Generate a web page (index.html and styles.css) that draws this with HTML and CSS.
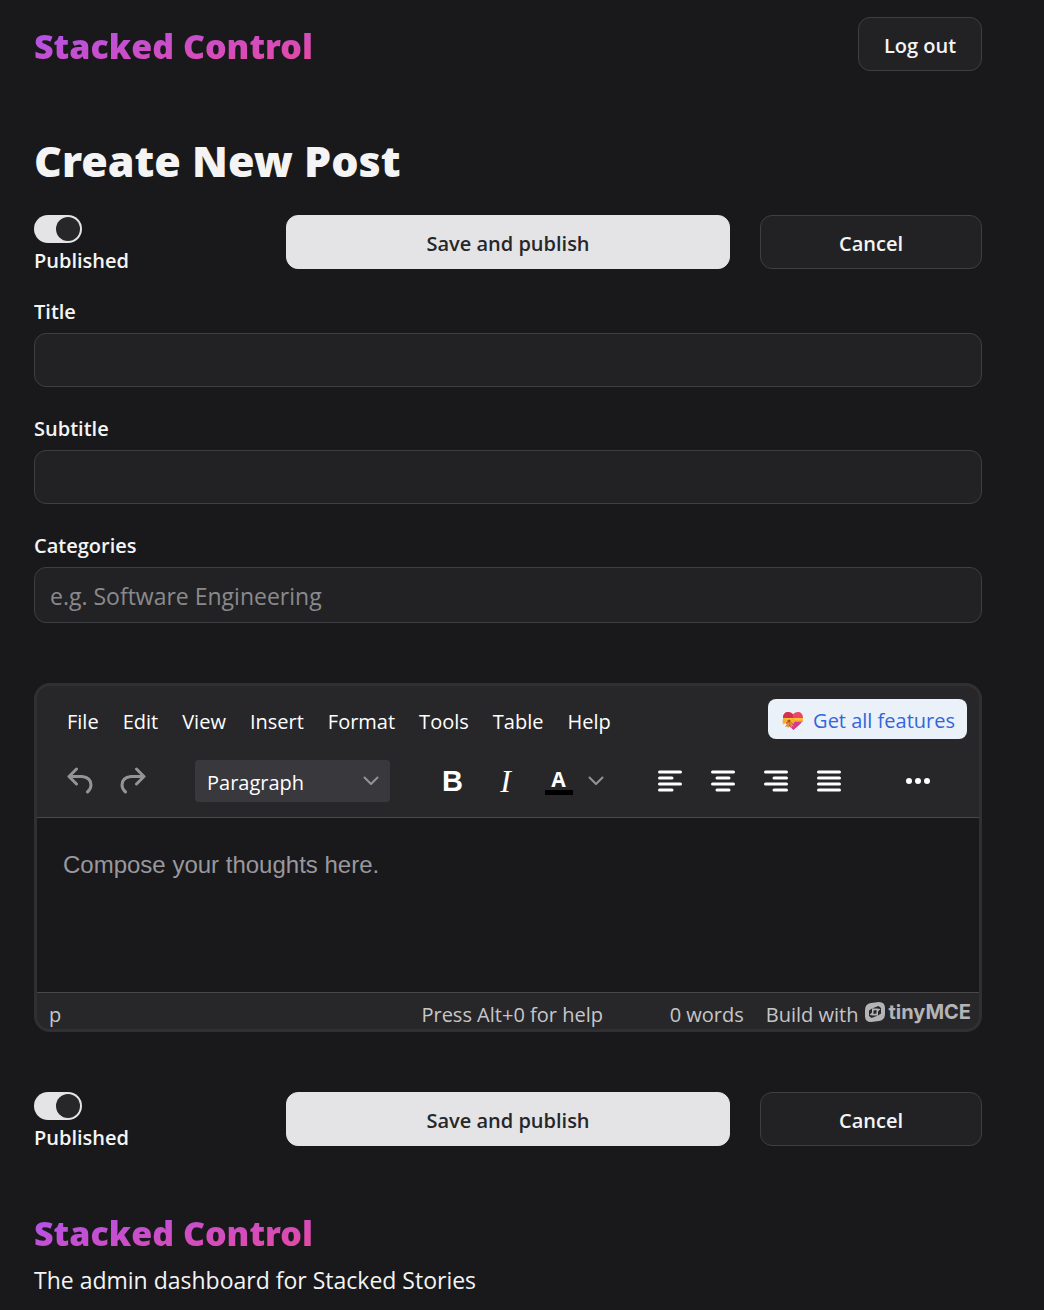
FILE: index.html
```html
<!DOCTYPE html>
<html lang="en">
<head>
  <meta charset="utf-8">
  <meta name="viewport" content="width=device-width, initial-scale=1">
  <title>Create New Post - Stacked Control</title>
  <link rel="stylesheet" href="styles.css">
</head>
<body>
  <header class="site-header">
    <a class="brand" href="#">Stacked Control</a>
    <button class="btn btn-small" type="button">Log out</button>
  </header>

  <main>
    <h1 class="page-title">Create New Post</h1>
    <form class="post-form">
      <div class="actions">
        <label class="toggle">
          <input class="switch" type="checkbox" role="switch" checked>
          <span>Published</span>
        </label>
        <button class="btn btn-primary" type="submit">Save and publish</button>
        <button class="btn" type="button">Cancel</button>
      </div>

      <div class="field">
        <label for="title">Title</label>
        <input class="text-input" id="title" type="text">
      </div>
      <div class="field">
        <label for="subtitle">Subtitle</label>
        <input class="text-input" id="subtitle" type="text">
      </div>
      <div class="field">
        <label for="categories">Categories</label>
        <input class="text-input text-input-tall" id="categories" type="text" placeholder="e.g. Software Engineering">
      </div>

      <section class="editor" aria-label="Post body">
        <div class="editor-head">
          <div class="menubar">
            <div class="menus">
              <button type="button">File</button>
              <button type="button">Edit</button>
              <button type="button">View</button>
              <button type="button">Insert</button>
              <button type="button">Format</button>
              <button type="button">Tools</button>
              <button type="button">Table</button>
              <button type="button">Help</button>
            </div>
            <a class="promo" href="#">
              <svg width="22" height="20" viewBox="0 0 22 20" aria-hidden="true">
                <path d="M11.500 19C9 16 1 12 1 6.500C1 3 3.500 1 6 1C8.300 1 10 2 11 3.500C12 2 13.700 1 16 1C18.500 1 21 3 21 6.500C21 12 14 16 11.500 19Z" fill="#ef4565"/>
                <path d="M1 7C1 3 3.500 1 6 1C8.300 1 10 2 11 3.500V7.500Z" fill="#d6304f"/>
                <path d="M11.500 19C14 16 20.500 12.500 21 8L9 11L8 15.500Z" fill="#d63a94"/>
                <path d="M1 7H21V10.500H1Z" fill="#fbc336"/>
                <path d="M1 9.500H21V10.500H1Z" fill="#e79b2c"/>
                <path d="M7 9.500L1.500 7Q-0.500 10 1.500 13.500Z M7 9.500L11.500 7Q13.500 9.500 11.500 13Z" fill="#f6b02c"/>
                <path d="M6.500 10L3 16L5 15.500L6.500 17L7.500 12L9.500 17L10.500 15L12 15.500L8 10Z" fill="#e2932b"/>
                <circle cx="7" cy="10" r="1.600" fill="#a8501f"/>
              </svg>
              <span>Get all features</span>
            </a>
          </div>

          <div class="toolbar">
            <div class="tools">
              <button class="muted" type="button" aria-label="Undo">
                <svg width="26" height="28" viewBox="0 0 26 28"><path d="M9.500 2L2 9.500L9.500 17M2 9.500H15Q24 10.500 24 18Q24 22 20.500 25"/></svg>
              </button>
              <button class="muted" type="button" aria-label="Redo">
                <svg width="26" height="28" viewBox="0 0 26 28"><path d="M16.500 2L24 9.500L16.500 17M24 9.500H11Q2 10.500 2 18Q2 22 5.500 25"/></svg>
              </button>
            </div>
            <div class="block-format">
              <select aria-label="Block format"><option>Paragraph</option></select>
              <svg width="16" height="10" viewBox="0 0 16 10" aria-hidden="true"><path d="M1.500 1.500L8 8L14.500 1.500"/></svg>
            </div>
            <div class="tools">
              <button class="glyph-bold" type="button" aria-label="Bold">B</button>
              <button class="glyph-italic" type="button" aria-label="Italic">I</button>
              <button class="glyph-color" type="button" aria-label="Text color"><span>A</span></button>
              <button class="narrow muted" type="button" aria-label="Text color menu">
                <svg width="16" height="10" viewBox="0 0 16 10"><path d="M1.500 1.500L8 8L14.500 1.500"/></svg>
              </button>
            </div>
            <div class="tools">
              <button type="button" aria-label="Align left">
                <svg width="24" height="22" viewBox="0 0 24 22"><path d="M1.500 2H22.500M1.500 8H14M1.500 14H22.500M1.500 20H14"/></svg>
              </button>
              <button type="button" aria-label="Align center">
                <svg width="24" height="22" viewBox="0 0 24 22"><path d="M1.500 2H22.500M6 8H18M1.500 14H22.500M6 20H18"/></svg>
              </button>
              <button type="button" aria-label="Align right">
                <svg width="24" height="22" viewBox="0 0 24 22"><path d="M1.500 2H22.500M10 8H22.500M1.500 14H22.500M10 20H22.500"/></svg>
              </button>
              <button type="button" aria-label="Justify">
                <svg width="24" height="22" viewBox="0 0 24 22"><path d="M1.500 2H22.500M1.500 8H22.500M1.500 14H22.500M1.500 20H22.500"/></svg>
              </button>
            </div>
            <div class="tools">
              <button type="button" aria-label="More">
                <svg class="dots" width="24" height="6" viewBox="0 0 24 6"><circle cx="3" cy="3" r="3"/><circle cx="12" cy="3" r="3"/><circle cx="21" cy="3" r="3"/></svg>
              </button>
            </div>
          </div>
        </div>

        <textarea class="compose" aria-label="Content" placeholder="Compose your thoughts here."></textarea>

        <div class="statusbar">
          <span class="path">p</span>
          <span class="help">Press Alt+0 for help</span>
          <span class="words">0 words</span>
          <span class="credit">Build with
            <a class="tiny" href="#">
              <svg width="20" height="20" viewBox="0 0 20 20" aria-hidden="true">
                <path fill-rule="evenodd" fill="currentColor" d="M6 1L14 0Q20 0 20 6V12Q20 18 14 19L6 20Q0 20 0 14V8Q0 2 6 1ZM7 6.500L13.500 4L16 6V11.500L13 13.500L6.500 16L4 14V8.500ZM7 6.500V10.500L4.500 13L8 13.500L13 13.500V9.500L15.500 7L12 6.500ZM8.500 8.500L11.500 8V11.500L8.500 12Z"/>
              </svg>
              <span>tinyMCE</span>
            </a>
          </span>
        </div>
      </section>

      <div class="actions">
        <label class="toggle">
          <input class="switch" type="checkbox" role="switch" checked>
          <span>Published</span>
        </label>
        <button class="btn btn-primary" type="submit">Save and publish</button>
        <button class="btn" type="button">Cancel</button>
      </div>
    </form>
  </main>

  <footer class="site-footer">
    <a class="brand" href="#">Stacked Control</a>
    <p>The admin dashboard for Stacked Stories</p>
  </footer>
</body>
</html>
```
FILE: styles.css
```css
*,
*::before,
*::after {
  box-sizing: border-box;
}

body {
  margin: 0;
  padding: 17px 62px 0 34px;
  background: #19191b;
  color: #f4f4f5;
  font-family: "Open Sans", "Noto Sans", sans-serif;
  font-size: 20px;
  line-height: 28px;
}

button,
input,
select,
textarea {
  font: inherit;
  color: inherit;
}

button {
  padding: 0;
  border: 0;
  background: none;
  cursor: pointer;
}

a {
  color: inherit;
  text-decoration: none;
}

.site-header {
  display: flex;
  justify-content: space-between;
  align-items: center;
}

.brand {
  width: fit-content;
  padding-top: 4px;
  font-family: "Noto Sans", "Open Sans", sans-serif;
  font-size: 34px;
  font-weight: 900;
  line-height: 50px;
  background: linear-gradient(to bottom right, #a855f7, #ec4899);
  background-clip: text;
  -webkit-background-clip: text;
  color: transparent;
}

.btn {
  height: 54px;
  padding-top: 3px;
  border: 1px solid #3f3f42;
  border-radius: 12px;
  background: #222224;
  font-weight: 600;
}

.btn-small {
  width: 124px;
}

.btn-primary {
  border-color: #e4e4e6;
  background: #e4e4e6;
  color: #27272a;
}

.page-title {
  margin: 61px 0 25px;
  font-family: "Noto Sans", "Open Sans", sans-serif;
  font-size: 43px;
  font-weight: 900;
  line-height: 58px;
}

.actions {
  display: grid;
  grid-template-columns: 1fr 2fr 1fr;
  gap: 30px;
  align-items: start;
}

.toggle {
  display: flex;
  flex-direction: column;
  align-items: flex-start;
  gap: 4px;
  font-weight: 600;
}

.switch {
  appearance: none;
  display: flex;
  align-items: center;
  justify-content: flex-end;
  width: 48px;
  height: 28px;
  margin: 0;
  padding: 2px;
  border-radius: 14px;
  background: #e4e4e6;
}

.switch::before {
  content: "";
  width: 24px;
  height: 24px;
  border-radius: 50%;
  background: #27272a;
}

.field {
  display: flex;
  flex-direction: column;
  gap: 7px;
  margin-top: 23px;
  font-weight: 600;
}

.field + .field {
  margin-top: 28px;
}

.text-input {
  width: 100%;
  height: 54px;
  padding: 2px 15px 0;
  border: 1px solid #3f3f42;
  border-radius: 12px;
  background: #222224;
  font-size: 23px;
  font-weight: 400;
}

.text-input-tall {
  height: 56px;
}

.text-input::placeholder {
  color: #8a8a8e;
  opacity: 1;
}

.editor {
  display: flex;
  flex-direction: column;
  margin: 60px 0;
  border: 3px solid #303033;
  border-radius: 16px;
  background: #27272a;
  overflow: hidden;
}

.editor-head {
  border-bottom: 1px solid #48484b;
}

.menubar {
  display: flex;
  justify-content: space-between;
  align-items: center;
  padding: 13px 12px 0 30px;
}

.menus {
  display: flex;
  gap: 24px;
  padding-top: 5px;
  color: #ffffff;
}

.promo {
  display: flex;
  align-items: center;
  gap: 9px;
  height: 40px;
  padding: 3px 12px 0 14px;
  border-radius: 8px;
  background: #eaf1f8;
  color: #3366dd;
}

.toolbar {
  display: flex;
  gap: 36px;
  align-items: center;
  padding: 21px 16px 15px;
}

.tools {
  display: flex;
  color: #ffffff;
}

.tools button {
  display: flex;
  align-items: center;
  justify-content: center;
  width: 53px;
  height: 42px;
}

.tools .narrow {
  width: 22px;
}

.toolbar svg {
  fill: none;
  stroke: currentColor;
  stroke-width: 3;
  stroke-linecap: round;
  stroke-linejoin: round;
}

.toolbar .dots {
  fill: currentColor;
  stroke: none;
}

.tools .muted,
.toolbar .block-format svg {
  color: #949496;
}

.toolbar .narrow svg,
.toolbar .block-format svg {
  stroke-width: 2;
}

.block-format {
  display: grid;
  align-items: center;
  width: 195px;
}

.block-format > * {
  grid-area: 1 / 1;
}

.block-format select {
  appearance: none;
  width: 100%;
  height: 42px;
  padding: 3px 36px 0 12px;
  border: 0;
  border-radius: 4px;
  background: #39393d;
  color: #ffffff;
}

.block-format svg {
  justify-self: end;
  margin-right: 11px;
  pointer-events: none;
}

.glyph-bold {
  font-family: "Liberation Sans", sans-serif;
  font-size: 29px;
  font-weight: 700;
}

.glyph-italic {
  font-family: "Liberation Serif", serif;
  font-size: 32px;
  font-style: italic;
}

.glyph-color span {
  width: 28px;
  border-bottom: 5px solid #000000;
  font-size: 21px;
  font-weight: 700;
  line-height: 22px;
}

.compose {
  display: block;
  width: 100%;
  height: 174px;
  padding: 33px 26px;
  border: 0;
  background: #19191b;
  font-family: "Liberation Sans", sans-serif;
  font-size: 24px;
  resize: none;
}

.compose::placeholder {
  color: #98989d;
  opacity: 1;
}

.statusbar {
  display: flex;
  align-items: center;
  height: 37px;
  padding: 7px 8px 0 12px;
  border-top: 1px solid #48484b;
  color: #c6c6c8;
}

.path {
  flex: 3;
}

.help {
  flex: 2;
}

.words {
  margin-right: 22px;
}

.credit,
.tiny {
  display: flex;
  align-items: center;
}

.credit {
  gap: 7px;
}

.tiny {
  gap: 3px;
  padding-bottom: 5px;
  color: #b4b4b6;
  font-family: "Inter", sans-serif;
  font-weight: 700;
}

.site-footer {
  padding: 52px 0 14px;
}

.site-footer .brand {
  display: block;
}

.site-footer p {
  margin: 8px 0 0;
  font-size: 23px;
}
```
